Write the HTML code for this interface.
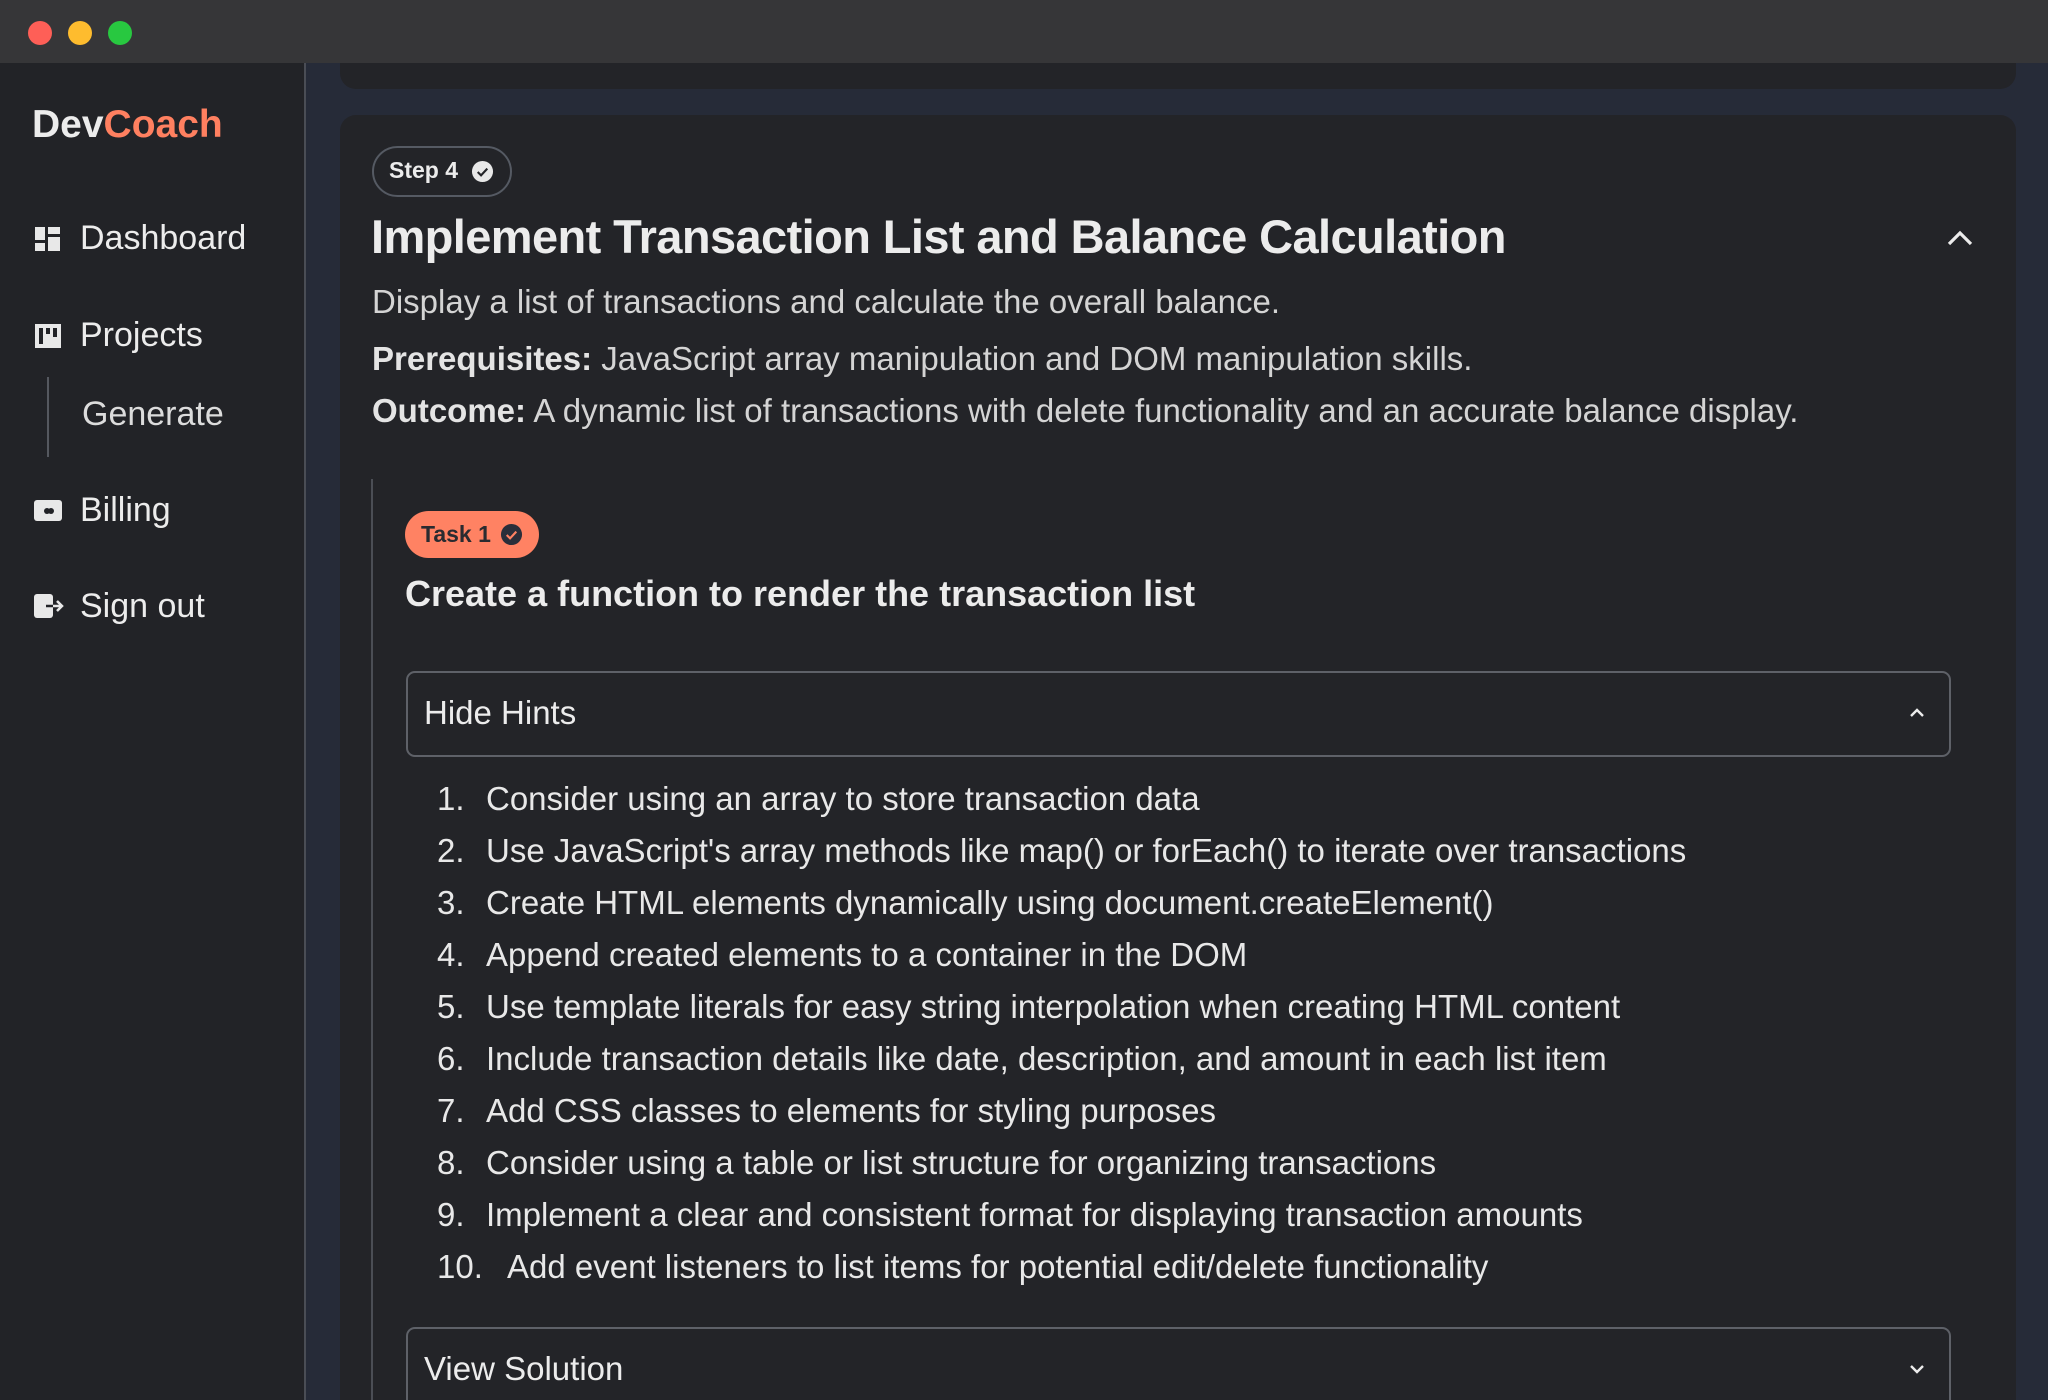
<!DOCTYPE html>
<html><head><meta charset="utf-8">
<style>
*{margin:0;padding:0;box-sizing:border-box}
html,body{width:2048px;height:1400px;overflow:hidden;background:#262b38;font-family:"Liberation Sans",sans-serif;color:#e6e6e6;position:relative}
.abs{position:absolute;white-space:nowrap;line-height:1.15}
.tb{position:absolute;left:0;top:0;width:2048px;height:63px;background:#363638;z-index:5}
.dot{position:absolute;top:21px;width:24px;height:24px;border-radius:50%}
.side{position:absolute;left:0;top:63px;width:306px;height:1337px;background:#222327;border-right:2px solid #4a4d55}
.card{position:absolute;left:340px;width:1676px;background:#232428;border-radius:16px}
.nav{font-size:34px;color:#ececec}
.li{position:absolute;left:437px;font-size:33px;color:#e8e8e8;white-space:nowrap;line-height:38px}
.li span{display:inline-block;width:49px}
</style></head><body>
<div class="tb">
<div class="dot" style="left:28px;background:#fe5f57"></div>
<div class="dot" style="left:68px;background:#febc2e"></div>
<div class="dot" style="left:108px;background:#28c840"></div>
</div>
<div class="side">
<div class="abs" style="left:32px;top:40px;font-size:39px;font-weight:bold"><span style="color:#ececec">Dev</span><span style="color:#ff8060">Coach</span></div>
<svg class="abs" style="left:35px;top:164px" width="25" height="24" viewBox="0 0 25 24"><rect x="0" y="0" width="10" height="13" fill="#e8e8e8"/><rect x="13" y="0" width="12" height="7" fill="#e8e8e8"/><rect x="0" y="16" width="10" height="8" fill="#e8e8e8"/><rect x="13" y="10" width="12" height="14" fill="#e8e8e8"/></svg>
<div class="abs nav" style="left:80px;top:156px">Dashboard</div>
<svg class="abs" style="left:35px;top:261px" width="26" height="24" viewBox="0 0 26 24"><rect x="0" y="0" width="26" height="24" fill="#e8e8e8"/><rect x="4" y="4" width="4" height="16" fill="#222327"/><rect x="11" y="4" width="4" height="6" fill="#222327"/><rect x="18" y="4" width="4" height="9" fill="#222327"/></svg>
<div class="abs nav" style="left:80px;top:253px">Projects</div>
<div class="abs" style="left:47px;top:314px;width:2px;height:80px;background:#55585f"></div>
<div class="abs nav" style="left:82px;top:332px;color:#dcdcdc">Generate</div>
<svg class="abs" style="left:34px;top:437px" width="28" height="21" viewBox="0 0 28 21"><rect x="0" y="0" width="28" height="21" rx="3" fill="#e8e8e8"/><circle cx="13" cy="11" r="3" fill="#222327"/><circle cx="17" cy="11" r="3" fill="#222327"/></svg>
<div class="abs nav" style="left:80px;top:428px">Billing</div>
<svg class="abs" style="left:34px;top:531px" width="30" height="24" viewBox="0 0 30 24"><rect x="0" y="0" width="19" height="24" rx="3" fill="#e8e8e8"/><path d="M12 12H28M23 7l5 5-5 5" stroke="#e8e8e8" stroke-width="2.5" fill="none"/><path d="M12 12H19" stroke="#222327" stroke-width="2.5"/></svg>
<div class="abs nav" style="left:80px;top:524px">Sign out</div>
</div>

<div class="card" style="top:40px;height:49px"></div>
<div class="card" style="top:115px;height:1285px;border-bottom-left-radius:0;border-bottom-right-radius:0"></div>

<div class="abs" style="left:372px;top:146px;width:140px;height:51px;border:2px solid #555a63;border-radius:26px"></div>
<div class="abs" style="left:389px;top:157px;font-size:23px;font-weight:bold;color:#ececec">Step 4</div>
<svg class="abs" style="left:471px;top:160px" width="23" height="23" viewBox="0 0 24 24"><circle cx="12" cy="12" r="11" fill="#e8e8e8"/><path d="M7 12.5l3.5 3.5 6.5-7" stroke="#232428" stroke-width="2.2" fill="none"/></svg>

<div class="abs" style="left:371px;top:210px;font-size:47px;font-weight:bold;color:#ececec;letter-spacing:-0.6px">Implement Transaction List and Balance Calculation</div>
<svg class="abs" style="left:1947px;top:230px" width="26" height="16" viewBox="0 0 26 16"><path d="M2 14L13 3l11 11" stroke="#ececec" stroke-width="3.2" fill="none"/></svg>

<div class="abs" style="left:372px;top:283px;font-size:33px;color:#d4d4d4">Display a list of transactions and calculate the overall balance.</div>
<div class="abs" style="left:372px;top:340px;font-size:33px;color:#d4d4d4"><b style="color:#e4e4e4">Prerequisites:</b> JavaScript array manipulation and DOM manipulation skills.</div>
<div class="abs" style="left:372px;top:392px;font-size:33px;color:#d4d4d4"><b style="color:#e4e4e4">Outcome:</b> A dynamic list of transactions with delete functionality and an accurate balance display.</div>

<div class="abs" style="left:371px;top:479px;width:2px;height:921px;background:#4b4e55"></div>

<div class="abs" style="left:405px;top:511px;width:134px;height:47px;background:#ff8263;border-radius:24px"></div>
<div class="abs" style="left:421px;top:521px;font-size:23px;font-weight:bold;color:#2a2b30">Task 1</div>
<svg class="abs" style="left:500px;top:523px" width="23" height="23" viewBox="0 0 24 24"><circle cx="12" cy="12" r="11" fill="#2a2e3a"/><path d="M7 12.5l3.5 3.5 6.5-7" stroke="#ff8263" stroke-width="2.2" fill="none"/></svg>
<div class="abs" style="left:405px;top:573px;font-size:36px;font-weight:bold;color:#ececec">Create a function to render the transaction list</div>

<div class="abs" style="left:406px;top:671px;width:1545px;height:86px;border:2px solid #5e6168;border-radius:9px"></div>
<div class="abs" style="left:424px;top:694px;font-size:33px;color:#ececec">Hide Hints</div>
<svg class="abs" style="left:1909px;top:707px" width="16" height="11" viewBox="0 0 16 11"><path d="M2 9L8 3l6 6" stroke="#ececec" stroke-width="2.4" fill="none"/></svg>

<div class="li" style="top:780px"><span>1.</span>Consider using an array to store transaction data</div>
<div class="li" style="top:832px"><span>2.</span>Use JavaScript's array methods like map() or forEach() to iterate over transactions</div>
<div class="li" style="top:884px"><span>3.</span>Create HTML elements dynamically using document.createElement()</div>
<div class="li" style="top:936px"><span>4.</span>Append created elements to a container in the DOM</div>
<div class="li" style="top:988px"><span>5.</span>Use template literals for easy string interpolation when creating HTML content</div>
<div class="li" style="top:1040px"><span>6.</span>Include transaction details like date, description, and amount in each list item</div>
<div class="li" style="top:1092px"><span>7.</span>Add CSS classes to elements for styling purposes</div>
<div class="li" style="top:1144px"><span>8.</span>Consider using a table or list structure for organizing transactions</div>
<div class="li" style="top:1196px"><span>9.</span>Implement a clear and consistent format for displaying transaction amounts</div>
<div class="li" style="top:1248px"><span style="width:70px">10.</span>Add event listeners to list items for potential edit/delete functionality</div>

<div class="abs" style="left:406px;top:1327px;width:1545px;height:73px;border:2px solid #5e6168;border-bottom:none;border-radius:9px 9px 0 0"></div>
<div class="abs" style="left:424px;top:1350px;font-size:33px;color:#ececec">View Solution</div>
<svg class="abs" style="left:1909px;top:1364px" width="16" height="11" viewBox="0 0 16 11"><path d="M2 2l6 6 6-6" stroke="#ececec" stroke-width="2.4" fill="none"/></svg>
</body></html>
